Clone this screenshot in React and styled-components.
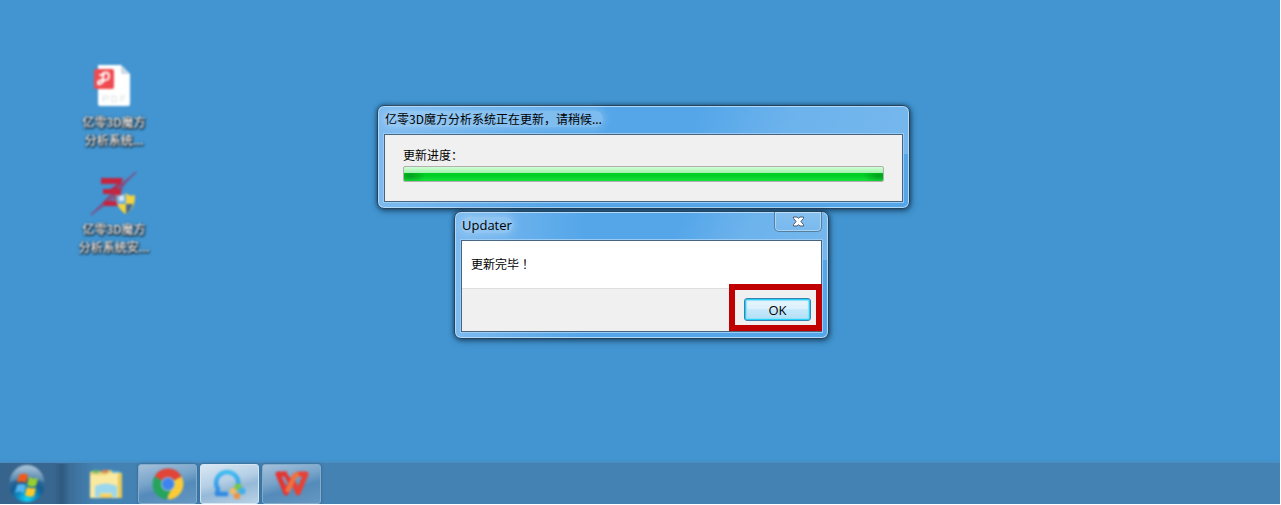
import styled, { createGlobalStyle, css } from "styled-components";

export default function App() {
  return (
    <>
      <GlobalStyle />
      <Desktop>
        <Shortcuts>
          <Shortcut href="#pdf">
            <PdfIcon />
            <ShortcutName>
              亿零3D魔方
              <br />
              分析系统...
            </ShortcutName>
          </Shortcut>
          <Shortcut href="#setup">
            <SetupIcon />
            <ShortcutName>
              亿零3D魔方
              <br />
              分析系统安...
            </ShortcutName>
          </Shortcut>
        </Shortcuts>

        <ProgressWindow>
          <TitleBar>
            <Title>亿零3D魔方分析系统正在更新，请稍候...</Title>
          </TitleBar>
          <Client>
            <ProgressBody>
              <label htmlFor="update-progress">更新进度：</label>
              <Progress id="update-progress" value="100" max="100" />
            </ProgressBody>
          </Client>
        </ProgressWindow>

        <MessageWindow role="dialog" aria-labelledby="updater-title">
          <TitleBar>
            <Title id="updater-title" $latin>
              Updater
            </Title>
            <Close aria-label="Close">
              <CloseIcon />
            </Close>
          </TitleBar>
          <Client>
            <Message>更新完毕！</Message>
            <Footer>
              <Highlight>
                <OkButton>OK</OkButton>
              </Highlight>
            </Footer>
          </Client>
        </MessageWindow>

        <Taskbar>
          <Start aria-label="Start">
            <StartIcon />
          </Start>
          <Task aria-label="Explorer">
            <FolderIcon />
          </Task>
          <Task aria-label="Chrome" $state="open">
            <ChromeIcon />
          </Task>
          <Task aria-label="Browser" $state="active">
            <BrowserIcon />
          </Task>
          <Task aria-label="WPS" $state="open">
            <WpsIcon />
          </Task>
        </Taskbar>
      </Desktop>
    </>
  );
}

function PdfIcon() {
  return (
    <Picture width="48" height="48" viewBox="0 0 48 48">
      <path d="M8 3h23l9 9v30a2 2 0 0 1-2 2H10a2 2 0 0 1-2-2z" fill="#fff" />
      <path d="M31 3l9 9h-7a2 2 0 0 1-2-2z" fill="#c9d8e4" />
      <rect x="4" y="7" width="20" height="20" rx="2" fill="#ee4b50" />
      <path
        d="M10 13h4M13 11q6-2 6 3t-6 4q-5 0-5 3t5-1v-5"
        fill="none"
        stroke="#fff"
        strokeWidth="2"
        strokeLinecap="round"
      />
      <path
        d="M13 40v-6h5v3h-5M22 34h3q3 3 0 6h-3zM31 40v-6h5M31 37h4"
        fill="none"
        stroke="#e2e4e6"
        strokeWidth="1.2"
      />
    </Picture>
  );
}

function SetupIcon() {
  return (
    <Picture width="48" height="48" viewBox="0 0 48 48">
      <path d="M46 3L36 14 28 27 16 36 1 46 14 32 26 18z" fill="#a72b50" opacity="0.5" />
      <path d="M46 3L1 46" stroke="#8d4277" strokeWidth="1.2" />
      <path
        d="M11 9h22l-2 6H11zM13 20h19l-2 5H13zM25 24h6v11l-4 2H14v-5h11z"
        fill="#c5243f"
      />
      <path d="M29 14l4-2-8 9h-6z" fill="#b8294a" />
      <path d="M36 24c3 3 6 3 9 2 0 9-2 15-9 19-7-4-10-10-10-19 4 1 7 1 10-2z" fill="#f4d23f" />
      <path d="M36 24v11H27q-1-4-1-9c4 1 7 1 10-2z" fill="#6facdf" />
      <path d="M36 35h7q-2 7-7 10z" fill="#466c90" />
      <path d="M29 27l5-1v6h-5z" fill="#d7e9f6" />
    </Picture>
  );
}

function CloseIcon() {
  return (
    <svg width="13" height="11" viewBox="0 0 13 11">
      <path
        d="M1.5 1h3.7l1.3 1.4L7.8 1h3.7v1.4L8.9 5.5l2.6 3.1V10H7.8L6.5 8.6 5.2 10H1.5V8.6l2.6-3.1-2.6-3.1z"
        fill="#fff"
        stroke="#4a5a70"
        strokeWidth="1"
      />
    </svg>
  );
}

function StartIcon() {
  return (
    <Picture width="40" height="40" viewBox="0 0 40 40">
      <defs>
        <radialGradient id="orb" cx="0.5" cy="0.92" r="0.85">
          <stop offset="0" stopColor="#10d5f5" />
          <stop offset="0.25" stopColor="#0d9bd0" />
          <stop offset="0.55" stopColor="#155a90" />
          <stop offset="1" stopColor="#547fa5" />
        </radialGradient>
        <linearGradient id="orb-shine" x1="0" y1="0" x2="0" y2="1">
          <stop offset="0" stopColor="#c8dceb" stopOpacity="0.8" />
          <stop offset="1" stopColor="#80a9c8" stopOpacity="0.4" />
        </linearGradient>
      </defs>
      <circle cx="20" cy="20" r="18" fill="url(#orb)" />
      <path d="M3 18a17 17 0 0 1 34 0q-17-7-34 0z" fill="url(#orb-shine)" />
      <path d="M12 11q5-3 9 0l-2 8q-5-3-9 0z" fill="#f05a1c" />
      <path d="M22 13q4 3 9 1l-2 8q-5 2-9-1z" fill="#98cf30" />
      <path d="M10 21q4-2 9 0l-2 8q-5-3-9 0z" fill="#55b5ee" />
      <path d="M20 23q4 2 9 1l-2 8q-5 2-9-1z" fill="#ffc928" />
    </Picture>
  );
}

function FolderIcon() {
  return (
    <Picture width="40" height="36" viewBox="0 0 40 36">
      <path d="M4 6l6-2 9 3 4-3 13 3v25H4z" fill="#e9d277" />
      <path d="M7 4h6v3H7z" fill="#68b969" />
      <path d="M16 4h6v3h-6z" fill="#df8450" />
      <path d="M26 5h7v4h-7z" fill="#64b8df" />
      <path d="M4 9h16l3-2h10v25H4z" fill="#fae9a0" />
      <path d="M32 8h4v24h-4z" fill="#e6c95a" />
      <path d="M9 31V20q11-5 22 0v11h-5v-4H14v4z" fill="#9bd7ed" />
      <path d="M14 28h12v4H14z" fill="#f1cf61" />
    </Picture>
  );
}

function ChromeIcon() {
  return (
    <Picture width="36" height="36" viewBox="0 0 36 36">
      <path d="M18 18L4.5 10.5a15.5 15.5 0 0 1 27 0z" fill="#e04537" />
      <path d="M18 18L31.5 10.5A15.5 15.5 0 0 1 18 33.5z" fill="#fbcb36" />
      <path d="M18 18l3 6-5 9.4A15.5 15.5 0 0 1 4.5 10.5z" fill="#26a45b" />
      <circle cx="18" cy="18" r="7" fill="#9fc0ea" />
      <circle cx="18" cy="18" r="6" fill="#3f83ec" />
    </Picture>
  );
}

function BrowserIcon() {
  return (
    <Picture width="40" height="36" viewBox="0 0 40 36">
      <defs>
        <linearGradient id="ring" x1="0" y1="0" x2="0" y2="1">
          <stop offset="0" stopColor="#46bdf1" />
          <stop offset="1" stopColor="#3088e2" />
        </linearGradient>
      </defs>
      <path
        d="M18 28H7l1-5a11 11 0 1 1 20-4"
        fill="none"
        stroke="url(#ring)"
        strokeWidth="4.5"
        strokeLinejoin="round"
      />
      <circle cx="28" cy="21" r="3.6" fill="#73c84a" />
      <circle cx="32" cy="25" r="3.6" fill="#43afe8" />
      <circle cx="23" cy="25" r="3.2" fill="#f0bb62" />
      <circle cx="27" cy="30" r="3.2" fill="#ec9443" />
    </Picture>
  );
}

function WpsIcon() {
  return (
    <Picture width="40" height="36" viewBox="0 0 40 36">
      <g fill="none" strokeWidth="5" strokeLinejoin="round">
        <path d="M15 8H6l8 19 6-14" stroke="#e63431" />
        <path d="M25 8h9l-8 19-7-16" stroke="#ea4033" />
        <path d="M15 26l8-17h4" stroke="#f1713f" />
        <path d="M14 9l3 6" stroke="#e63431" strokeWidth="4" />
      </g>
    </Picture>
  );
}

const GlobalStyle = createGlobalStyle`
  * {
    box-sizing: border-box;
  }

  body {
    margin: 0;
    background: #fff;
    font: 12px/16px "Noto Sans CJK SC", sans-serif;
    color: #000;
  }

  button {
    padding: 0;
    border: none;
    background: none;
    font: inherit;
    color: inherit;
  }
`;

const Desktop = styled.main`
  position: relative;
  display: flex;
  flex-direction: column;
  justify-content: space-between;
  min-height: calc(100vh - 1px);
  margin: 0 1px 1px 0;
  background: #4295d1;
  overflow: hidden;
`;

const Shortcuts = styled.nav`
  display: flex;
  flex-direction: column;
  align-items: flex-start;
  gap: 20px;
  padding: 62px 74px 0;
`;

const Shortcut = styled.a`
  display: flex;
  flex-direction: column;
  align-items: center;
  gap: 3px;
  width: 80px;
  color: #fff;
  text-decoration: none;
`;

const ShortcutName = styled.span`
  line-height: 18px;
  text-align: center;
  white-space: nowrap;
  color: #fff;
  font-weight: 500;
  text-shadow: 0 0 2px rgba(0, 0, 0, 0.7), 1px 1px 2px #000, 0 1px 2px #000;
  filter: blur(1px);
`;

const Picture = styled.svg`
  flex: none;
  filter: blur(1px);
`;

const Window = styled.section`
  position: absolute;
  padding: 0 6px 6px;
  border: 1px solid #24435f;
  border-radius: 7px;
  background:
    linear-gradient(115deg, transparent 58%, rgba(255, 255, 255, 0.14) 75%, rgba(255, 255, 255, 0.2)) top / 100% 48px no-repeat,
    linear-gradient(90deg, #7dbaf0 0, #54a6e9 35%, #54a6e9);
  box-shadow:
    inset 0 0 0 1px #b2daf8,
    0 0 4px rgba(10, 35, 60, 0.6),
    1px 2px 6px rgba(10, 35, 60, 0.5);
`;

const ProgressWindow = styled(Window)`
  top: 105px;
  left: 377px;
  width: 533px;
`;

const MessageWindow = styled(Window)`
  top: 211px;
  left: 454px;
  width: 375px;
`;

const TitleBar = styled.header`
  display: flex;
  justify-content: space-between;
  align-items: flex-start;
  height: 28px;
`;

const Title = styled.h1`
  margin: 5px 0 0;
  padding: 0 1px;
  font-size: 12px;
  font-weight: 400;
  line-height: 16px;
  background: rgba(190, 222, 248, 0.4);
  box-shadow: 0 0 8px 2px rgba(190, 222, 248, 0.4);
  border-radius: 8px;

  ${({ $latin }) =>
    $latin &&
    css`
      font-family: "Open Sans", sans-serif;
      font-size: 13px;
    `}
`;

const Close = styled.button`
  display: flex;
  justify-content: center;
  align-items: center;
  width: 48px;
  height: 20px;
  border: 1px solid #557f9f;
  border-top: none;
  border-radius: 0 0 5px 5px;
  background: linear-gradient(rgba(255, 255, 255, 0.15), rgba(255, 255, 255, 0.05));
  box-shadow: inset 0 0 0 1px rgba(190, 224, 250, 0.7);
`;

const Client = styled.div`
  border: 1px solid #47637d;
  background: #f0f0f0;
  box-shadow: 0 0 0 1px #9acbf4;
`;

const ProgressBody = styled.div`
  display: flex;
  flex-direction: column;
  gap: 3px;
  padding: 12px 18px 19px;
`;

const Progress = styled.progress`
  appearance: none;
  display: block;
  width: 100%;
  height: 16px;
  border: 1px solid #b0b0b0;
  border-radius: 2px;
  overflow: hidden;

  &::-webkit-progress-bar {
    background: #e6e6e6;
  }

  &::-webkit-progress-value {
    background:
      linear-gradient(#d0ffd4, #a2f0ac) top / 100% 6px no-repeat,
      radial-gradient(ellipse 16px 7px at 6px 9px, rgba(0, 120, 20, 0.55), transparent),
      radial-gradient(ellipse 16px 7px at calc(100% - 4px) 9px, rgba(0, 120, 20, 0.55), transparent),
      linear-gradient(#00cf25 60%, #18e03c);
  }
`;

const Message = styled.p`
  margin: 0;
  padding: 15px 9px 16px;
  background: #fff;
  font-family: "Noto Sans CJK JP", sans-serif;
`;

const Footer = styled.footer`
  display: flex;
  justify-content: flex-end;
  padding: 9px 10px 10px;
  border-top: 1px solid #dfdfdf;
`;

const Highlight = styled.div`
  position: relative;

  &::after {
    content: "";
    position: absolute;
    inset: -14px -11px -10px -15px;
    border: 6px solid #c00000;
    pointer-events: none;
  }
`;

const OkButton = styled.button`
  display: block;
  width: 67px;
  height: 23px;
  border: 1px solid #3c7fb1;
  border-radius: 3px;
  background: linear-gradient(#eaf6fd 0, #d9f0fc 50%, #c6e9fb 50%, #b0def6);
  box-shadow: inset 0 0 0 1px #22d0f8, inset 0 0 1px 2px #8fe0f8;
  font-family: "Open Sans", sans-serif;
  font-size: 13px;
  line-height: 20px;
`;

const Taskbar = styled.footer`
  display: flex;
  gap: 3px;
  height: 41px;
  padding: 1px 0 0 4px;
  background: linear-gradient(90deg, #37648d 0, #39678f 60px, #4482b3 95px, #4482b3);
  box-shadow: 0 0 4px #5584ae;
`;

const Start = styled.button`
  display: flex;
  align-items: center;
  width: 69px;
  padding-left: 3px;
  background: linear-gradient(90deg, transparent 50px, rgba(40, 80, 115, 0.6) 58px, transparent 66px);
`;

const Task = styled.button`
  display: flex;
  justify-content: center;
  align-items: center;
  width: 59px;
  height: 40px;
  border: 1px solid transparent;
  border-radius: 3px;

  ${({ $state }) =>
    $state === "open" &&
    css`
      border-color: #82abcc;
      background: linear-gradient(165deg, #a4c0da 0, #79a5ca 38%, #548bba 60%, #6597c1);
      box-shadow: 0 0 3px #315f87;
    `}

  ${({ $state }) =>
    $state === "active" &&
    css`
      border-color: #d5e5f2;
      background: linear-gradient(165deg, #dae7f3 0, #b5cfe5 42%, #95b9d7 60%, #bad2e5);
      box-shadow: 0 0 3px #315f87;
    `}
`;
